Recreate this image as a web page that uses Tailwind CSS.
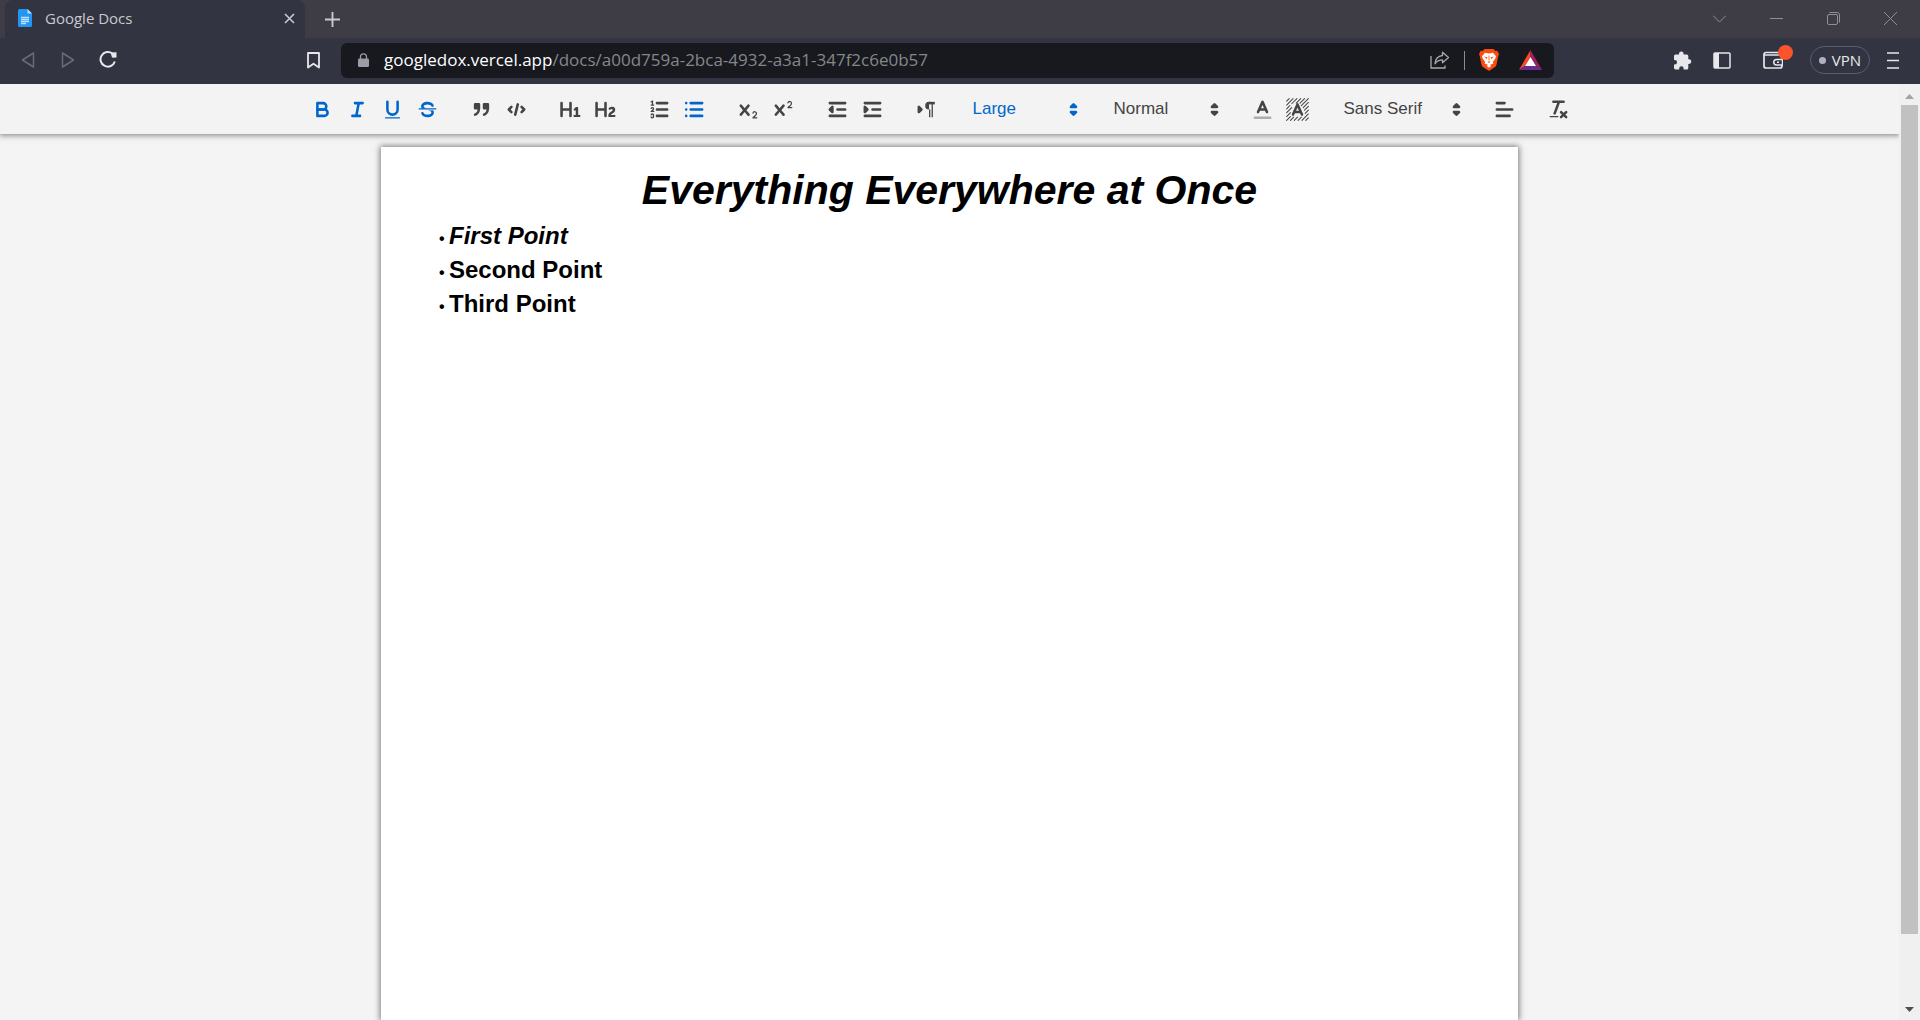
<!DOCTYPE html>
<html lang="en">
<head>
<meta charset="utf-8">
<title>Google Docs</title>
<script src="https://cdn.jsdelivr.net/npm/@tailwindcss/browser@4"></script>
</head>
<body class="flex h-screen flex-col overflow-hidden bg-[#f4f4f4] font-['Liberation_Sans',Arial,sans-serif]">

<!-- Shared shapes -->
<svg class="hidden" aria-hidden="true">
  <symbol id="updown" viewBox="0 0 18 18"><path d="M7 11l2 2 2-2zM7 7l2-2 2 2z" fill="currentColor" stroke="currentColor" stroke-width="2" stroke-linejoin="round"/></symbol>
  <symbol id="cross" viewBox="0 0 18 18"><path fill="currentColor" d="M9.65,5.241a1,1,0,0,0-1.409.108L6,7.964,3.759,5.349A1,1,0,0,0,2.192,6.592Q2.215,6.621,2.241,6.649L4.684,9.5,2.241,12.35A1,1,0,0,0,3.71,13.707q.026-.028.049-.057L6,11.036,8.241,13.65a1,1,0,1,0,1.567-1.243Q9.785,12.378,9.759,12.35L7.316,9.5,9.759,6.651A1,1,0,0,0,9.65,5.241Z"/></symbol>
</svg>

<!-- Tab strip -->
<header class="shrink-0 font-['Open_Sans',sans-serif]">
  <div class="flex h-[38px] items-center bg-[#3e3d45] pl-[5px] text-[#c9c9cd]">
    <div class="flex h-full w-[300px] items-center rounded-t-lg bg-[#323442] pr-2 pb-0.5 pl-[13px]">
      <svg class="h-[18px] w-[14px]" viewBox="0 0 14 18"><path d="M1.500 0H9.500L14 4.500V16.500Q14 18 12.500 18H1.500Q0 18 0 16.500V1.500Q0 0 1.500 0z" fill="#2196f3"/><path d="M9.500 0L14 4.500H9.500z" fill="#bbdefb"/><path d="M3 8.500h8M3 10.500h8M3 12.500h8M3 14.500h5" stroke="#bbdefb" stroke-width="1.300"/></svg>
      <span class="ml-[13px] grow text-[15px] leading-5">Google Docs</span>
      <button aria-label="Close tab" class="grid size-4 place-items-center"><svg class="size-[11px]" viewBox="0 0 11 11"><path d="M1 1l9 9M10 1l-9 9" stroke="currentColor" stroke-width="1.600"/></svg></button>
    </div>
    <button aria-label="New tab" class="ml-5"><svg class="size-[15px]" viewBox="0 0 15 15"><path d="M7.500 0v15M0 7.500h15" stroke="currentColor" stroke-width="1.900"/></svg></button>
    <div class="ml-auto flex items-center gap-11 pr-[23px] pb-0.5 text-[#8f8f94]">
      <button aria-label="Search tabs"><svg class="size-[13px]" viewBox="0 0 13 13"><path d="M0 3.500l6.500 6.500L13 3.500" fill="none" stroke="currentColor"/></svg></button>
      <button aria-label="Minimize"><svg class="size-[13px]" viewBox="0 0 13 13"><path d="M0 6.500h13" stroke="currentColor"/></svg></button>
      <button aria-label="Restore"><svg class="size-[13px]" viewBox="0 0 13 13"><rect x=".5" y="2.500" width="10" height="10" rx="1.500" fill="none" stroke="currentColor"/><path d="M2.500.5h7.500q2.500 0 2.500 2.500v7.500" fill="none" stroke="currentColor"/></svg></button>
      <button aria-label="Close window"><svg class="size-[13px]" viewBox="0 0 13 13"><path d="M0 0l13 13M13 0L0 13" stroke="currentColor"/></svg></button>
    </div>
  </div>

  <!-- Address row -->
  <div class="flex h-[46px] items-center bg-[#323442] px-[21px] pb-0.5 text-[#e8e8ec]">
    <button aria-label="Back" class="text-[#696b76]"><svg class="h-4 w-[14px]" viewBox="0 0 14 16"><path d="M12.500 1v14L1.500 8z" fill="none" stroke="currentColor" stroke-width="1.500" stroke-linejoin="round"/></svg></button>
    <button aria-label="Forward" class="ml-[26px] text-[#696b76]"><svg class="h-4 w-[14px]" viewBox="0 0 14 16"><path d="M1.500 1v14l11-7z" fill="none" stroke="currentColor" stroke-width="1.500" stroke-linejoin="round"/></svg></button>
    <button aria-label="Reload" class="ml-6"><svg class="size-[18px]" viewBox="0 0 18 18"><path d="M13.500 2.700A7.300 7.300 0 1 0 15.800 10.500" fill="none" stroke="currentColor" stroke-width="2"/><path d="M12 1.500l5.500-.3v5.300l-4 .3q-1.500-1.500-1.500-5.300z" fill="currentColor"/></svg></button>
    <button aria-label="Bookmark" class="ml-[189px]"><svg class="h-[17px] w-[15px]" viewBox="0 0 15 17"><path d="M2 1h11v14.500l-5.500-3.800L2 15.500z" fill="none" stroke="currentColor" stroke-width="1.800" stroke-linejoin="round"/></svg></button>
    <div class="ml-5 flex h-[35px] w-[1213px] items-center rounded-md bg-[#17191f] pr-3 pl-[17px]">
      <svg class="h-[14px] w-[11px] text-[#9a9ca6]" viewBox="0 0 11 14"><path d="M2.500 6V3.800a3 3 0 0 1 6 0V6" fill="none" stroke="currentColor" stroke-width="1.300"/><rect y="5.500" width="11" height="8.500" rx="1.300" fill="currentColor"/></svg>
      <a href="#" class="ml-[15px] grow text-[17px] leading-6 whitespace-nowrap text-[#85878b]"><span class="text-white">googledox.vercel.app</span>/docs/a00d759a-2bca-4932-a3a1-347f2c6e0b57</a>
      <button aria-label="Share" class="text-[#a8a9ad]"><svg class="h-[18px] w-[20px]" viewBox="0 0 20 18"><path d="M1 5v12h14v-2.500" fill="none" stroke="currentColor" stroke-width="1.300"/><path d="M12.500 1.200l6 5.300-6 5.300V8.800q-5 0-7.500 4 .5-7.500 7.500-8.300z" fill="none" stroke="currentColor" stroke-width="1.300" stroke-linejoin="round"/></svg></button>
      <span class="mx-[14px] h-[19px] w-px bg-[#8a8b90]"></span>
      <button aria-label="Shields"><svg class="h-[22px] w-[20px]" viewBox="0 0 20 22"><path d="M5.500 0h9l1.800 2 2-.2L20 5l-.8 2.200-1.700 8.600q-.4 1.500-1.800 2.500L10 22l-5.700-3.700q-1.400-1-1.800-2.500L.8 7.200 0 5l1.700-3.200 2 .2z" fill="#fb4b0e"/><path d="M6 3.800l4 .8 4-.8 3 3.500-.7 2.200-2.500 3.500.6 1.500-2 .8-2.400 1.200-2.400-1.200-2-.8.600-1.500-2.500-3.500L3 7.300z" fill="#fff"/><path d="M5 7.500l3.500.8-.7 1.700zM15 7.500l-3.500.8.7 1.700zM8.300 12.500h3.400L10 14z" fill="#fb4b0e"/><path d="M10 6.500v5" stroke="#fb4b0e" stroke-width=".8"/><path d="M7.500 16.800l2.500-1.100 2.500 1.100-2.500 2z" fill="#fff"/></svg></button>
      <button aria-label="Rewards" class="ml-5"><svg class="h-[20px] w-[23px]" viewBox="0 0 23 20"><path d="M11.500 0L0 20l6-4 5.500-9z" fill="#ff4724"/><path d="M11.500 0L23 20l-6-4-5.500-9z" fill="#9e1f63"/><path d="M0 20h23l-6-4H6z" fill="#662d91"/><path d="M11.500 7L6 16h11z" fill="#fff"/></svg></button>
    </div>
    <div class="ml-auto flex items-center">
      <button aria-label="Extensions"><svg class="h-[19px] w-[19px]" viewBox="0 0 19 19"><path d="M1 5q0-1.500 1.500-1.500H6V2.700a2.300 2.300 0 0 1 4.600 0v.8h3.200q1.500 0 1.500 1.500v3.300h.7a2.300 2.300 0 0 1 0 4.600h-.7v4q0 1.500-1.500 1.500h-3.200v-1a2.200 2.200 0 0 0-4.400 0v1H2.500Q1 18.400 1 17v-3.500h.8a2.200 2.200 0 0 0 0-4.400H1z" fill="currentColor"/></svg></button>
      <button aria-label="Sidebar" class="ml-[21px]"><svg class="h-[17px] w-[18px]" viewBox="0 0 18 17"><rect x="1" y="1" width="16" height="15" rx="1" fill="none" stroke="currentColor" stroke-width="1.500"/><path d="M1 1h5v15H1z" fill="currentColor"/></svg></button>
      <button aria-label="Wallet" class="relative ml-8"><svg class="h-[18px] w-[20px]" viewBox="0 0 20 18"><rect x="1" y="1.500" width="18" height="15.500" rx="2" fill="none" stroke="currentColor" stroke-width="1.700"/><path d="M1 4h18" stroke="currentColor" stroke-width="1.500"/><path d="M19.500 8.500h-6a2.500 2.500 0 0 0 0 5.500h6z" fill="#323442" stroke="currentColor" stroke-width="1.500"/><path d="M14 11.200h2" stroke="currentColor" stroke-width="1.500"/></svg><span class="absolute -top-1.5 left-[15px] size-[15px] rounded-full bg-[#fb542b]"></span></button>
      <button class="ml-[27px] flex h-7 w-[60px] items-center justify-center gap-1.5 rounded-full border border-[#5a5d70] text-[15px]"><span class="size-[7px] rounded-full bg-[#b0b0c4]"></span>VPN</button>
      <button aria-label="Menu" class="ml-[17px]"><svg class="h-[17px] w-[12px]" viewBox="0 0 12 17"><path d="M0 1h12M0 8.500h12M0 16h12" stroke="currentColor" stroke-width="1.700"/></svg></button>
    </div>
  </div>
</header>

<div class="flex min-h-0 grow">
  <main class="flex min-w-0 grow flex-col items-center overflow-hidden">

    <!-- Formatting toolbar -->
    <div role="toolbar" aria-label="Formatting" class="z-10 flex h-[50px] w-full shrink-0 items-center justify-center bg-[#f3f3f3] text-[#444] shadow-[0_0_6px_1px_rgba(0,0,0,0.5)]">
      <div class="mr-[19px] flex text-[#06c]">
        <button aria-label="Bold" class="w-[35px] px-1.5"><svg class="size-[23px]" viewBox="0 0 18 18" fill="none" stroke="currentColor" stroke-width="2" stroke-linejoin="round"><path d="M5,4H9.500A2.500,2.500,0,0,1,9.500,9H5z"/><path d="M5,9h5.500A2.500,2.500,0,0,1,10.500,14H5z"/></svg></button>
        <button aria-label="Italic" class="w-[35px] px-1.5"><svg class="size-[23px]" viewBox="0 0 18 18" fill="none" stroke="currentColor" stroke-width="2" stroke-linecap="round"><path d="M7 4h6M5 14h6M8 14L10 4"/></svg></button>
        <button aria-label="Underline" class="w-[35px] px-1.5"><svg class="size-[23px]" viewBox="0 0 18 18" fill="none" stroke="currentColor" stroke-width="2" stroke-linecap="round"><path d="M5,3V9a4,4,0,0,0,8,0V3"/><rect x="3" y="15" width="12" height="1" rx=".5" fill="currentColor" stroke="none"/></svg></button>
        <button aria-label="Strikethrough" class="w-[35px] px-1.5"><svg class="size-[23px]" viewBox="0 0 18 18" fill="currentColor"><path d="M15.500 8.500h-13" stroke="currentColor" stroke-linecap="round"/><path d="M9.007,8C6.542,7.791,6,7.519,6,6.500,6,5.792,7.283,5,9,5c1.571,0,2.765.679,2.969,1.309a1,1,0,0,0,1.900-.617C13.356,4.106,11.354,3,9,3,6.200,3,4,4.538,4,6.500a3.200,3.200,0,0,0,.5,1.843Z"/><path d="M8.984,10C11.457,10.208,12,10.479,12,11.500c0,.708-1.283,1.500-3,1.500-1.571,0-2.765-.679-2.969-1.309a1,1,0,1,0-1.900.617C4.644,13.894,6.646,15,9,15c2.800,0,5-1.538,5-3.500a3.200,3.200,0,0,0-.5-1.843Z"/></svg></button>
      </div>
      <div class="mr-[19px] flex">
        <button aria-label="Quote" class="w-[35px] px-1.5"><svg class="size-[23px]" viewBox="0 0 18 18" fill="currentColor" stroke="currentColor" stroke-width="2" stroke-linejoin="round" stroke-linecap="round"><rect x="4" y="5" width="3" height="3"/><rect x="11" y="5" width="3" height="3"/><path fill="none" d="M7,8c0,4.031-3,5-3,5M14,8c0,4.031-3,5-3,5"/></svg></button>
        <button aria-label="Code block" class="w-[35px] px-1.5"><svg class="size-[23px]" viewBox="0 0 18 18" fill="none" stroke="currentColor" stroke-width="2" stroke-linecap="round" stroke-linejoin="round"><path d="M5 7L3 9l2 2M13 7l2 2-2 2M10 5L8 13"/></svg></button>
      </div>
      <div class="mr-[19px] flex">
        <button aria-label="Heading 1" class="w-[35px] px-1.5"><svg class="size-[23px]" viewBox="0 0 18 18" fill="currentColor"><path d="M10,4V14a1,1,0,0,1-2,0V10H3v4a1,1,0,0,1-2,0V4A1,1,0,0,1,3,4V8H8V4a1,1,0,0,1,2,0Zm6.068,9.209H14.990V7.599a.541.541,0,0,0-.605-.605h-.627a1.011,1.011,0,0,0-.748.297L11.645,8.566a.544.544,0,0,0-.022.858l.286.308a.539.539,0,0,0,.847.033l.099-.088a1.214,1.214,0,0,0,.242-.353h.022s-.011.309-.011.605V13.209H12.041a.541.541,0,0,0-.605.605v.439a.541.541,0,0,0,.605.605h4.027a.541.541,0,0,0,.605-.605v-.439A.541.541,0,0,0,16.068,13.209Z"/></svg></button>
        <button aria-label="Heading 2" class="w-[35px] px-1.5"><svg class="size-[23px]" viewBox="0 0 18 18" fill="currentColor"><path d="M16.740,13.814v.439a.541.541,0,0,1-.605.605H11.855a.584.584,0,0,1-.649-.605V14.013c0-2.905,3.399-3.422,3.399-4.555a.777.777,0,0,0-.847-.781,1.177,1.177,0,0,0-.836.385c-.275.264-.561.374-.858.132l-.429-.341c-.308-.242-.385-.518-.154-.814a2.972,2.972,0,0,1,2.454-1.177,2.454,2.454,0,0,1,2.684,2.409c0,2.453-3.179,2.927-3.278,3.938h2.794A.541.541,0,0,1,16.740,13.814ZM9,3A1,1,0,0,0,8,4V8H3V4A1,1,0,0,0,1,4V14a1,1,0,0,0,2,0V10H8v4a1,1,0,0,0,2,0V4A1,1,0,0,0,9,3Z"/></svg></button>
      </div>
      <div class="mr-[19px] flex">
        <button aria-label="Numbered list" class="w-[35px] px-1.5"><svg class="size-[23px]" viewBox="0 0 18 18" fill="none" stroke="currentColor" stroke-linecap="round"><path d="M7 4h8M7 9h8M7 14h8" stroke-width="2"/><path d="M2.500 3l1-.5v3M2.500 5.500h2M4.500,10.500h-2c0-.234,1.850-1.076,1.850-2.234A.959.959,0,0,0,2.500,8.156M2.500,14.846a.959.959,0,0,0,1.850-.109A.7.7,0,0,0,3.750,14a.688.688,0,0,0,.6-.736.959.959,0,0,0-1.850-.109"/></svg></button>
        <button aria-label="Bulleted list" class="w-[35px] px-1.5 text-[#06c]"><svg class="size-[23px]" viewBox="0 0 18 18" fill="none" stroke="currentColor" stroke-width="2" stroke-linecap="round"><path d="M6 4h9M6 9h9M6 14h9"/><path d="M2.500 4h.01M2.500 9h.01M2.500 14h.01"/></svg></button>
      </div>
      <div class="mr-[19px] flex">
        <button aria-label="Subscript" class="w-[35px] px-1.5"><svg class="size-[23px]" viewBox="0 0 18 18" fill="currentColor"><use href="#cross"/><path d="M15.500,15H13.861a3.858,3.858,0,0,0,1.914-2.975,1.800,1.800,0,0,0-1.600-1.751A1.921,1.921,0,0,0,12.021,11.700a.5.5,0,1,0,.957.291h0a.914.914,0,0,1,1.053-.725.81.81,0,0,1,.744.762c0,1.076-1.170,1.870-1.940,2.431A1.456,1.456,0,0,0,12,15.500a.5.5,0,0,0,.5.5h3A.5.5,0,0,0,15.500,15Z"/></svg></button>
        <button aria-label="Superscript" class="w-[35px] px-1.5"><svg class="size-[23px]" viewBox="0 0 18 18" fill="currentColor"><use href="#cross"/><path d="M15.500,7H13.861a4.015,4.015,0,0,0,1.914-2.975,1.800,1.800,0,0,0-1.600-1.751A1.922,1.922,0,0,0,12.021,3.700a.5.5,0,1,0,.957.291.917.917,0,0,1,1.053-.725.81.81,0,0,1,.744.762c0,1.077-1.164,1.925-1.934,2.486A1.423,1.423,0,0,0,12,7.500a.5.5,0,0,0,.5.5h3A.5.5,0,0,0,15.500,7Z"/></svg></button>
      </div>
      <div class="mr-[19px] flex">
        <button aria-label="Outdent" class="w-[35px] px-1.5"><svg class="size-[23px]" viewBox="0 0 18 18" fill="none" stroke="currentColor" stroke-width="2" stroke-linecap="round" stroke-linejoin="round"><path d="M3 14h12M3 4h12M9 9h6"/><path d="M5 7v4L3 9z" fill="currentColor"/></svg></button>
        <button aria-label="Indent" class="w-[35px] px-1.5"><svg class="size-[23px]" viewBox="0 0 18 18" fill="none" stroke="currentColor" stroke-width="2" stroke-linecap="round" stroke-linejoin="round"><path d="M3 14h12M3 4h12M9 9h6"/><path d="M3 7v4l2-2z" fill="currentColor"/></svg></button>
      </div>
      <div class="mr-[19px] flex">
        <button aria-label="Text direction" class="w-[35px] px-1.5"><svg class="size-[23px]" viewBox="0 0 18 18" fill="currentColor"><path d="M3 11l2-2-2-2z" stroke="currentColor" stroke-width="2" stroke-linejoin="round"/><path d="M15.500 4H11" stroke="currentColor" stroke-width="2"/><path d="M11,3a3,3,0,0,0,0,6h1V3zM11 4h1v11h-1zM13 4h1v11h-1z"/></svg></button>
      </div>
      <div class="relative mr-[19px] w-[122px] text-[#06c]">
        <select aria-label="Size" class="h-[30px] w-full appearance-none pl-2.5 text-[17px] leading-6 outline-none"><option>Large</option></select>
        <svg class="pointer-events-none absolute inset-y-0 right-0 my-auto size-[23px]"><use href="#updown"/></svg>
      </div>
      <div class="relative mr-[19px] w-[122px]">
        <select aria-label="Heading" class="h-[30px] w-full appearance-none pl-2.5 text-[17px] leading-6 outline-none"><option>Normal</option></select>
        <svg class="pointer-events-none absolute inset-y-0 right-0 my-auto size-[23px]"><use href="#updown"/></svg>
      </div>
      <div class="mr-[19px] flex">
        <button aria-label="Text color" class="w-[35px] px-1.5"><svg class="size-[23px]" viewBox="0 0 18 18" fill="none" stroke="currentColor" stroke-width="2" stroke-linecap="round" stroke-linejoin="round"><path d="M3 15.500h12" opacity=".4"/><path d="M5.500 11L9 3l3.500 8M11.630 9H6.380"/></svg></button>
        <button aria-label="Background color" class="w-[35px] px-1.5"><svg class="size-[23px]" viewBox="0 0 18 18" fill="none" stroke="currentColor" stroke-linecap="round" stroke-linejoin="round"><path d="M.5 2.500l2-2M.5 5.500l5-5M.5 8.500l2.500-2.500M4.500 4.500l4-4M.5 11.500l4-4M8 4l3.500-3.500M.5 14.500l3-3M11 4l3.500-3.500M.5 17.500l3-3M12 6l5.500-5.500M3.500 17.500L6 15M13.500 7.500l4-4M6.500 17.500L9 15M14.500 9.500l3-3M9.500 17.500L12 15M15 12l2.500-2.500M12.500 17.500l5-5M15.500 17.500l2-2" stroke-width=".8"/><path d="M5.500 13L9 5l3.500 8M11.630 11H6.380" stroke-width="2"/></svg></button>
      </div>
      <div class="relative mr-[19px] w-[134px]">
        <select aria-label="Font" class="h-[30px] w-full appearance-none pl-2.5 text-[17px] leading-6 outline-none"><option>Sans Serif</option></select>
        <svg class="pointer-events-none absolute inset-y-0 right-0 my-auto size-[23px]"><use href="#updown"/></svg>
      </div>
      <div class="mr-[19px] flex">
        <button aria-label="Align" class="w-[35px] px-1.5"><svg class="size-[23px]" viewBox="0 0 18 18" fill="none" stroke="currentColor" stroke-width="2" stroke-linecap="round"><path d="M3 9h12M3 14h10M3 4h6"/></svg></button>
      </div>
      <div class="mr-[19px] flex">
        <button aria-label="Clear formatting" class="w-[35px] px-1.5"><svg class="size-[23px]" viewBox="0 0 18 18" fill="none" stroke="currentColor" stroke-width="2" stroke-linecap="round"><path d="M5 3h8M6 12L9.350 3M11 11l4 4M15 11l-4 4"/><rect x="2" y="14" width="7" height="1" rx=".5" fill="currentColor" stroke="none"/></svg></button>
      </div>
    </div>

    <!-- Document sheet -->
    <article contenteditable="true" spellcheck="false" class="mt-[13px] w-3/5 max-w-[1137px] grow bg-white px-[58px] pt-[14px] text-black shadow-[0_0_6px_1px_rgba(0,0,0,0.5)] outline-none">
      <h1 class="text-center text-[41px] leading-[58px] font-bold italic">Everything Everywhere at Once</h1>
      <ul class="text-2xl leading-[34px] font-bold">
        <li class="flex items-baseline gap-1"><span class="w-1.5 text-base leading-none">•</span><em>First Point</em></li>
        <li class="flex items-baseline gap-1"><span class="w-1.5 text-base leading-none">•</span>Second Point</li>
        <li class="flex items-baseline gap-1"><span class="w-1.5 text-base leading-none">•</span>Third Point</li>
      </ul>
    </article>
  </main>

  <!-- Scroll track -->
  <div class="flex w-[21px] shrink-0 flex-col items-center bg-[#f0f0f0] pt-2.5 pb-2">
    <svg class="h-[5px] w-[9px]" viewBox="0 0 9 5"><path d="M0 5L4.500 0 9 5z" fill="#a3a3a3"/></svg>
    <div class="mt-[6px] mb-[73px] w-[17px] grow bg-[#c1c1c1]"></div>
    <svg class="h-[5px] w-[9px]" viewBox="0 0 9 5"><path d="M0 0h9L4.500 5z" fill="#505050"/></svg>
  </div>
</div>
</body>
</html>
